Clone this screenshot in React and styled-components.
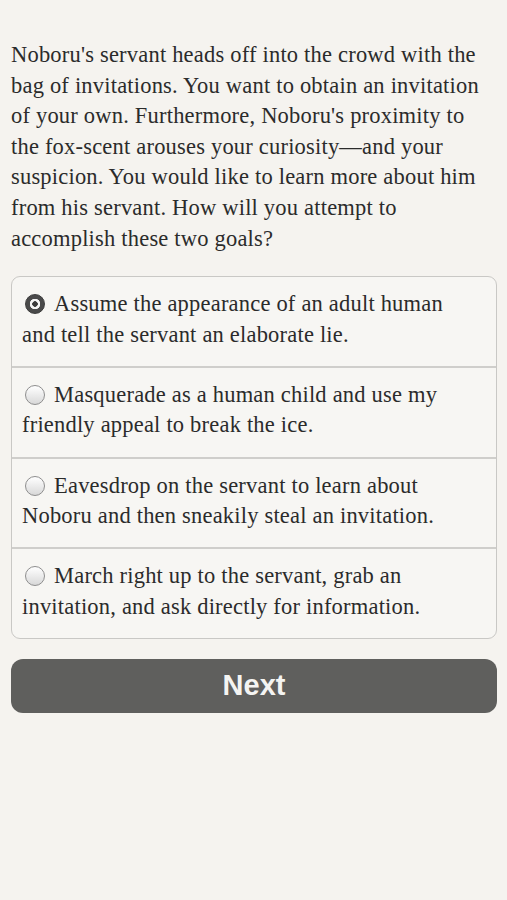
import React, { useState } from 'react';
import styled, { createGlobalStyle } from 'styled-components';

const GlobalStyle = createGlobalStyle`
    html, body {
        margin: 0;
        padding: 0;
        background: #f5f3ef;
    }
`;

const Page = styled.div`
    padding: 40px 10px 40px 11px;
    font-family: 'Liberation Serif', 'Times New Roman', serif;
    color: #2b2b2b;
`;

const Passage = styled.p`
    margin: 0;
    font-size: 22.5px;
    line-height: 30.6px;
    letter-spacing: 0.2px;
`;

const Choices = styled.div`
    margin-top: 22px;
    border: 1px solid #c9c8c5;
    border-radius: 9px;
    background: #f7f6f3;
    overflow: hidden;
`;

const Choice = styled.label`
    display: block;
    padding: 12px 18px 15.5px 10px;
    font-size: 22.5px;
    line-height: 30.6px;
    letter-spacing: 0.2px;
    cursor: pointer;
    & + & {
        border-top: 2px solid #cfcecb;
    }
`;

const Radio = styled.span`
    display: inline-block;
    box-sizing: border-box;
    width: 20px;
    height: 20px;
    margin: 0 9px 0 3px;
    vertical-align: -3px;
    border-radius: 50%;
    border: 1px solid ${p => (p.$checked ? '#3c3c3c' : '#8e8e8e')};
    background: ${p =>
        p.$checked
            ? 'radial-gradient(circle, #3a3a3a 0 2.5px, #f4f4f4 3px 5px, #4a4a4a 5.5px 100%)'
            : 'linear-gradient(#ffffff, #d8d8d8)'};
`;

const NextButton = styled.button`
    display: block;
    width: 100%;
    height: 54px;
    margin-top: 20px;
    border: none;
    border-radius: 12px;
    background: #5f5f5d;
    color: #f4f4f2;
    font-family: 'Liberation Sans', Arial, sans-serif;
    font-weight: bold;
    font-size: 29px;
    cursor: pointer;
`;

const options = [
    'Assume the appearance of an adult human and tell the servant an elaborate lie.',
    'Masquerade as a human child and use my friendly appeal to break the ice.',
    'Eavesdrop on the servant to learn about Noboru and then sneakily steal an invitation.',
    'March right up to the servant, grab an invitation, and ask directly for information.',
];

const App = () => {
    const [selected, setSelected] = useState(0);
    return (
        <Page>
            <GlobalStyle />
            <Passage>
                Noboru's servant heads off into the crowd with the bag of invitations. You want to
                obtain an invitation of your own. Furthermore, Noboru's proximity to the fox-scent
                arouses your curiosity—and your suspicion. You would like to learn more about him
                from his servant. How will you attempt to accomplish these two goals?
            </Passage>
            <Choices>
                {options.map((text, i) => (
                    <Choice key={i} onClick={() => setSelected(i)}>
                        <Radio $checked={selected === i} />
                        {text}
                    </Choice>
                ))}
            </Choices>
            <NextButton>Next</NextButton>
        </Page>
    );
};

export default App;
